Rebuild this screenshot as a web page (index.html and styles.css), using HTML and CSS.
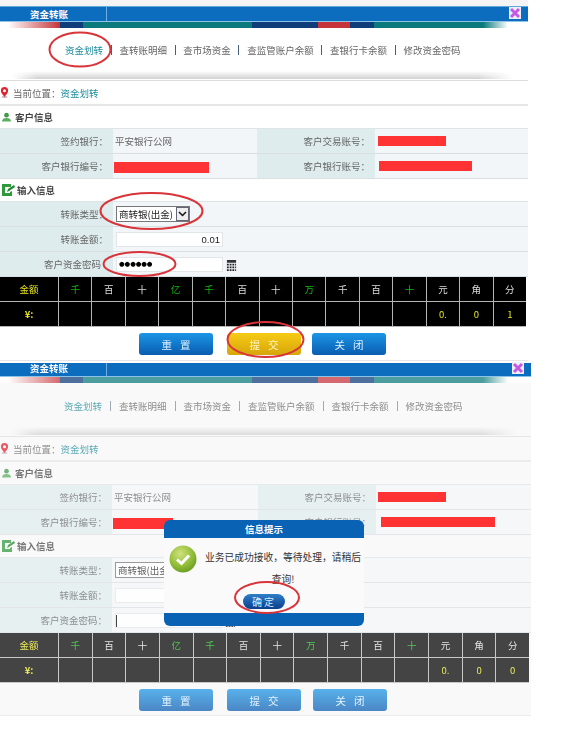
FILE: index.html
```html
<!DOCTYPE html>
<html lang="zh">
<head>
<meta charset="utf-8">
<title>资金转账</title>
<link rel="stylesheet" href="styles.css">
</head>
<body>
<div class="page">
  <svg class="defs" width="0" height="0" aria-hidden="true">
    <defs>
      <symbol id="pin" viewBox="0 0 10 12"><ellipse cx="5" cy="11" rx="3.5" ry="1" fill="#bbb"/><path d="M5 0a4 4 0 0 1 4 4c0 2.6-2.6 4.6-4 7-1.400-2.400-4-4.400-4-7a4 4 0 0 1 4-4z" fill="#e0202c"/><circle cx="5" cy="4" r="1.700" fill="#fff"/></symbol>
      <symbol id="person" viewBox="0 0 10 10"><circle cx="5" cy="3" r="2.600" fill="#3f9a4a"/><path d="M0 10c0-3 2-4 5-4s5 1 5 4z" fill="#5aae60"/></symbol>
      <symbol id="edit" viewBox="0 0 13 12"><path d="M0 0h9v3H3v6h5v-1l2-1v5H0z" fill="#2f9a3c"/><path d="M5 8l1-3 6-4 1 2-6 4z" fill="#1f8a2c"/></symbol>
      <symbol id="calc" viewBox="0 0 12 12"><path d="M1 0h10v3H1z" fill="#333"/><path d="M1 4h2v2H1zM4 4h2v2H4zM7 4h2v2H7zM10 4h1v2h-1zM1 7h2v2H1zM4 7h2v2H4zM7 7h2v2H7zM10 7h1v2h-1zM1 10h2v2H1zM4 10h2v2H4zM7 10h2v2H7zM10 10h1v2h-1z" fill="#222"/></symbol>
      <symbol id="close" viewBox="0 0 12 12"><rect width="12" height="12" fill="#eef"/><path d="M2 2l8 8M10 2l-8 8" stroke="#c45ae2" stroke-width="3"/></symbol>
      <radialGradient id="okg" cx=".4" cy=".3" r=".8"><stop offset="0" stop-color="#cfe27c"/><stop offset=".6" stop-color="#8fbb35"/><stop offset="1" stop-color="#5f9422"/></radialGradient>
    </defs>
  </svg>

  <div class="strip"></div>

  <section class="panel p1">
    <header class="bar"><span class="bar-title">资金转账</span><svg class="close"><use href="#close"/></svg></header>
    <div class="stripe"></div>
    <nav class="nav">
      <a class="active">资金划转</a><i></i><a>查转账明细</a><i></i><a>查市场资金</a><i></i><a>查监管账户余额</a><i></i><a>查银行卡余额</a><i></i><a>修改资金密码</a>
    </nav>
    <div class="loc"><svg class="ic-pin"><use href="#pin"/></svg><span>当前位置：</span><a>资金划转</a></div>
    <h3 class="head"><svg class="ic-person"><use href="#person"/></svg>客户信息</h3>
    <div class="row four"><div class="lab">签约银行：</div><div class="val">平安银行公网</div><div class="lab">客户交易账号：</div><div class="val"><b class="red r1"></b></div></div>
    <div class="row four"><div class="lab">客户银行编号：</div><div class="val"><b class="red r2"></b></div><div class="lab">客户银行账号：</div><div class="val"><b class="red r3"></b></div></div>
    <h3 class="head"><svg class="ic-edit"><use href="#edit"/></svg>输入信息</h3>
    <div class="row two"><div class="lab">转账类型：</div><div class="val"><div class="select"><span>商转银(出金)</span><em><svg width="9" height="6" viewBox="0 0 9 6"><path d="M1 1l3.500 3.500L8 1" fill="none" stroke="#111" stroke-width="1.500"/></svg></em></div></div></div>
    <div class="row two"><div class="lab">转账金额：</div><div class="val"><div class="input amount">0.01</div></div></div>
    <div class="row two"><div class="lab nocolon">客户资金密码</div><div class="val"><div class="input dots">●●●●●●</div><svg class="ic-calc"><use href="#calc"/></svg></div></div>
    <div class="money">
      <div class="y">金额</div><div class="g">千</div><div>百</div><div>十</div><div class="g">亿</div><div class="g">千</div><div>百</div><div>十</div><div class="g">万</div><div>千</div><div>百</div><div class="g">十</div><div>元</div><div>角</div><div>分</div>
      <div class="y b">¥:</div><div></div><div></div><div></div><div></div><div></div><div></div><div></div><div></div><div></div><div></div><div></div><div class="y">0.</div><div class="y">0</div><div class="y">1</div>
    </div>
    <div class="btns"><button>重置</button><button class="gold">提交</button><button class="last">关闭</button></div>
  </section>

  <section class="panel p2">
    <header class="bar"><span class="bar-title">资金转账</span><svg class="close"><use href="#close"/></svg></header>
    <div class="stripe"></div>
    <nav class="nav">
      <a class="active">资金划转</a><i></i><a>查转账明细</a><i></i><a>查市场资金</a><i></i><a>查监管账户余额</a><i></i><a>查银行卡余额</a><i></i><a>修改资金密码</a>
    </nav>
    <div class="loc"><svg class="ic-pin"><use href="#pin"/></svg><span>当前位置：</span><a>资金划转</a></div>
    <h3 class="head"><svg class="ic-person"><use href="#person"/></svg>客户信息</h3>
    <div class="row four"><div class="lab">签约银行：</div><div class="val">平安银行公网</div><div class="lab">客户交易账号：</div><div class="val"><b class="red r1"></b></div></div>
    <div class="row four"><div class="lab">客户银行编号：</div><div class="val"><b class="red r2"></b></div><div class="lab">客户银行账号：</div><div class="val"><b class="red r3"></b></div></div>
    <h3 class="head"><svg class="ic-edit"><use href="#edit"/></svg>输入信息</h3>
    <div class="row two"><div class="lab">转账类型：</div><div class="val"><div class="select"><span>商转银(出金)</span><em></em></div></div></div>
    <div class="row two"><div class="lab">转账金额：</div><div class="val"><div class="input amount"></div></div></div>
    <div class="row two"><div class="lab">客户资金密码：</div><div class="val"><div class="input caret"><u></u></div><svg class="ic-calc"><use href="#calc"/></svg></div></div>
    <div class="money">
      <div class="y">金额</div><div class="g">千</div><div>百</div><div>十</div><div class="g">亿</div><div class="g">千</div><div>百</div><div>十</div><div class="g">万</div><div>千</div><div>百</div><div class="g">十</div><div>元</div><div>角</div><div>分</div>
      <div class="y b">¥:</div><div></div><div></div><div></div><div></div><div></div><div></div><div></div><div></div><div></div><div></div><div></div><div class="y">0.</div><div class="y">0</div><div class="y">0</div>
    </div>
    <div class="btns"><button>重置</button><button>提交</button><button class="last">关闭</button></div>
    <div class="mask"></div>
    <div class="dialog">
      <div class="dlg-head">信息提示</div>
      <div class="dlg-body">
        <svg class="ok" viewBox="0 0 28 28"><circle cx="14" cy="14" r="13.500" fill="url(#okg)"/><path d="M8 14.500l4.500 4L20 10.500" fill="none" stroke="#fff" stroke-width="3"/></svg>
        <p>业务已成功接收，等待处理，请稍后查询!</p>
        <button class="ok-btn">确定</button>
      </div>
      <div class="dlg-foot"></div>
    </div>
  </section>

  <svg class="marks" width="573" height="729" aria-hidden="true">
    <ellipse cx="80" cy="49.500" rx="30.500" ry="17"/>
    <ellipse cx="151.500" cy="211" rx="51" ry="18"/>
    <ellipse cx="139.500" cy="264" rx="36" ry="12"/>
    <ellipse cx="265.500" cy="339.500" rx="38" ry="17.500"/>
    <ellipse cx="267" cy="597.500" rx="32" ry="15.500"/>
  </svg>
</div>
</body>
</html>
```

FILE: styles.css
```css
* { box-sizing: border-box; }
html, body { margin: 0; padding: 0; background: #fff; }
body { font-family: "Noto Sans CJK SC", "Liberation Sans", sans-serif; font-size: 9.5px; color: #666; overflow: hidden; }
.page { position: relative; width: 573px; height: 729px; filter: blur(.3px); }
.defs { position: absolute; }
.strip { width: 528px; height: 6px; background: #f4f4f4; }

.panel { position: relative; }
.p1 { width: 528px; height: 356px; }
.p2 { width: 531px; background: #f8f8f8; }

.bar { position: relative; display: flex; align-items: center; background: #0c6cbd; border-top: 1px solid #5fa9dd; border-bottom: 1px solid #8cc4e8; }
.p1 .bar { height: 16px; }
.p2 .bar { height: 14px; border-top: 0; margin-top: 1px; }
.bar-title { width: 107px; height: 100%; padding-right: 1px; padding-right: 8px; border-right: 1px solid #6fb0e0; text-align: center; color: #fff; font-weight: 700; font-size: 9.5px; line-height: 14px; }
.p2 .bar-title { line-height: 11px; }
.close { position: absolute; width: 12px; height: 12px; }
.p1 .close { left: 509px; top: 0; }
.p2 .close { left: 512px; top: -1px; }

.stripe { height: 6px; background: linear-gradient(90deg, #fff 8px, #c5343a 60px, #0f3d7a 60px, #0f3d7a 83px, #0a7a7c 83px, #0a7a7c 252px, #0f3d7a 252px, #0f3d7a 318px, #c5343a 318px, #c5343a 350px, #0f3d7a 350px, #0f3d7a 374px, #0a7a7c 374px, #0a7a7c 483px, #fff 508px); }

.nav { position: relative; display: flex; align-items: center; height: 53px; padding: 0 0 8px 65px; border-bottom: 1px solid #ddd; color: #666; }
.nav::after { content: ""; position: absolute; left: 12px; right: 15px; bottom: 1px; height: 8px; background: linear-gradient(180deg, rgba(190,190,190,0), rgba(190,190,190,.7)); -webkit-mask-image: linear-gradient(90deg, transparent, #000 5%, #000 93%, transparent); mask-image: linear-gradient(90deg, transparent, #000 5%, #000 93%, transparent); }
.nav a { white-space: nowrap; }
.nav a.active { color: #1f8c9c; }
.nav i { width: 1px; height: 10px; margin: 0 7.700px; background: #46607c; }
.p2 .nav { height: 54px; padding-left: 64px; }
.p2 .nav i { margin: 0 8px; background: #7d8ea0; }

.loc { display: flex; align-items: center; height: 25px; border-bottom: 2px solid #e6e6e6; color: #666; }
.loc a { color: #1f8c9c; }
.loc span { margin-left: 4px; }
.ic-pin { width: 9px; height: 11px; }

.head { display: flex; align-items: center; height: 23px; margin: 0; border-bottom: 1px solid #dfe4e6; font-size: 9.500px; font-weight: 700; color: #444; }
.ic-person { width: 9px; height: 10px; margin: 0 4px 0 2px; }
.ic-edit { width: 13px; height: 12px; margin: 0 2px 0 2px; }

.row { display: grid; height: 25px; border-bottom: 1px solid #d9dfe2; }
.four { grid-template-columns: 113px 144px 118px 1fr; }
.two { grid-template-columns: 113px 1fr; }
.p2 .four { grid-template-columns: 112px 146px 118px 1fr; }
.p2 .two { grid-template-columns: 112px 1fr; }
.lab { display: flex; align-items: center; justify-content: flex-end; padding-right: 5px; background: #deecee; color: #666; white-space: nowrap; }
.lab.nocolon { padding-right: 12px; }
.val { display: flex; align-items: center; padding-left: 3px; background: #f3f6f8; color: #666; }
.four .val:nth-child(2) { padding-left: 2px; }

.red { position: relative; z-index: 2; display: block; height: 10px; background: #ff3333; }
.val .r1 { width: 68px; }
.val .r2 { width: 95px; height: 11px; margin: 2px 0 0 -1px; }
.val .r3 { width: 93px; margin-left: 1px; }
.p2 .r1 { margin-left: -1px; }
.p2 .r2 { width: 60px; }
.p2 .r3 { width: 114px; margin-left: 2px; }

.select { display: flex; align-items: center; gap: 1px; width: 74px; height: 16px; border: 1px solid #777; background: #fff; color: #222; font-size: 9.500px; }
.select span { padding-left: 2px; white-space: nowrap; }
.select em { display: flex; align-items: center; justify-content: center; width: 13px; height: 14px; margin-left: auto; border: 1px solid #667; background: #eee; }
.input { width: 107px; height: 15px; background: #fff; border: 1px solid #e3e6e8; color: #222; }
.amount { text-align: right; padding-right: 2px; font-family: "Liberation Sans", sans-serif; line-height: 13px; font-size: 9.500px; }
.dots { font-size: 6.500px; line-height: 13px; letter-spacing: -.1px; padding-left: 2px; color: #000; font-family: "DejaVu Sans", sans-serif; }
.caret { position: relative; }
.caret u { position: absolute; left: 0; top: 1px; width: 1px; height: 12px; background: #000; }
.ic-calc { width: 11px; height: 11px; margin: 3px 0 0 3px; }

.money { display: grid; grid-template-columns: 58px repeat(14, 1fr); grid-template-rows: 24px 24px; gap: 1px; width: 526px; height: 50px; background: #b5b5b5; padding-bottom: 1px; font-size: 9.500px; }
.p2 .money { width: 529px; }
.money div { display: flex; align-items: center; justify-content: center; background: #000; color: #ddd; }
.money .y { color: #e6e61e; }
.money .g { color: #0fb80f; }
.money .b { font-weight: 700; }

.btns { display: flex; height: 34px; padding: 6px 0 0 139px; gap: 14px; border-bottom: 1px solid #e6e6e6; }
.btns button { width: 74px; height: 22px; padding: 0 0 0 8px; border: 0; border-radius: 3px; background: linear-gradient(180deg, #1b96e6, #0a5cb0); color: #dff1ff; font: 10.500px "Noto Sans CJK SC", sans-serif; letter-spacing: 8px; }
.btns .gold { background: linear-gradient(180deg, #f7cb14, #d7a50c); color: #fff6c8; }
.btns .last { margin-left: -3px; }
.p2 .btns { height: 33px; }
.p2 .btns .last { margin-left: -2px; }

.mask { position: absolute; left: 0; right: 0; top: 14px; bottom: 0; background: rgba(250, 250, 250, .27); }
.dialog { position: absolute; z-index: 3; left: 164px; top: 157px; width: 200px; }
.dlg-head { height: 18px; border-radius: 6px 6px 0 0; background: #0a62b4; color: #fff; text-align: center; font-weight: 700; line-height: 18px; }
.dlg-body { position: relative; height: 75px; background: #fafafb; }
.dlg-body p { margin: 0; padding: 8px 3px 0 41px; color: #333; font-size: 9.750px; line-height: 22px; text-align: center; }
.ok { position: absolute; left: 5px; top: 7px; width: 28px; height: 28px; }
.ok-btn { position: absolute; left: 79px; top: 56px; width: 42px; height: 15px; padding: 0; border: 0; border-radius: 8px; background: linear-gradient(180deg, #2f7ec8, #0a3f8c); color: #dcecff; font: 10px/15px "Noto Sans CJK SC", sans-serif; letter-spacing: 2px; }
.dlg-foot { height: 13px; border-radius: 0 0 6px 6px; background: #0a62b4; }

.marks { position: absolute; left: 0; top: 0; z-index: 4; pointer-events: none; }
.marks ellipse { fill: none; stroke: #d9343a; stroke-width: 2; }
```
